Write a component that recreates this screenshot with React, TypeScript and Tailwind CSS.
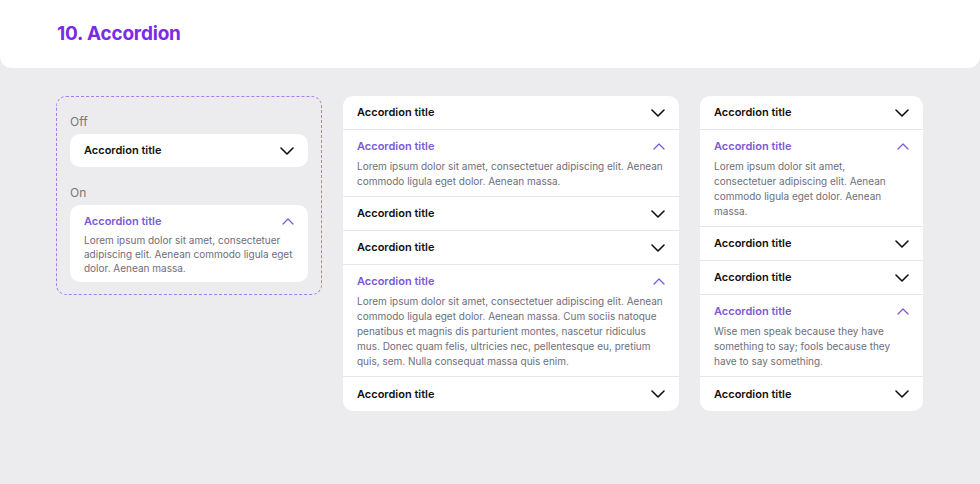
import React from "react";

const Down = () => (
  <svg width="14" height="8" viewBox="0 0 14 8" fill="none"><path d="M1 1l6 6 6-6" stroke="#111" strokeWidth="1.6" strokeLinecap="round" strokeLinejoin="round"/></svg>
);
const Up = () => (
  <svg width="12" height="7" viewBox="0 0 12 7" fill="none"><path d="M1 6l5-5 5 5" stroke="#7b5ad6" strokeWidth="1.3" strokeLinecap="round" strokeLinejoin="round"/></svg>
);

const Closed = ({ last }: { last?: boolean }) => (
  <div className={`h-[34px] flex items-center justify-between px-[14px] ${last ? "" : "border-b border-[#e6e6ea]"}`}>
    <span className="text-[11px] font-semibold text-[#111]">Accordion title</span>
    <Down />
  </div>
);
const Open = ({ text }: { text: string }) => (
  <div className="px-[14px] pt-[9px] pb-[7px] border-b border-[#e6e6ea]">
    <div className="flex items-center justify-between h-[14px]">
      <span className="text-[11px] font-semibold text-[#7b5ad6]">Accordion title</span>
      <Up />
    </div>
    <p className="mt-[6px] text-[10px] leading-[15px] text-[#6e6e7a]">{text}</p>
  </div>
);

const short = "Lorem ipsum dolor sit amet, consectetuer adipiscing elit. Aenean commodo ligula eget dolor. Aenean massa.";
const long = "Lorem ipsum dolor sit amet, consectetuer adipiscing elit. Aenean commodo ligula eget dolor. Aenean massa. Cum sociis natoque penatibus et magnis dis parturient montes, nascetur ridiculus mus. Donec quam felis, ultricies nec, pellentesque eu, pretium quis, sem. Nulla consequat massa quis enim.";

export default function App() {
  return (
    <div className="w-[980px] h-[484px] bg-[#ececee] overflow-hidden" style={{ fontFamily: "Inter, 'Noto Sans', sans-serif" }}>
      <div className="h-[68px] bg-white rounded-b-[12px] flex items-center px-[57px]">
        <h1 className="text-[19px] font-bold text-[#7c2ae8] tracking-[-0.2px]">10. Accordion</h1>
      </div>
      <div className="flex items-start gap-[21px] pl-[56px] pt-[28px]">
        <div className="w-[266px] border border-dashed border-[#a77cf0] rounded-[10px] px-[13px] pt-[16px] pb-[12px]">
          <div className="text-[12px] text-[#777]">Off</div>
          <div className="mt-[3px] bg-white rounded-[10px] h-[33px] flex items-center justify-between px-[14px]">
            <span className="text-[11px] font-semibold text-[#111]">Accordion title</span>
            <Down />
          </div>
          <div className="mt-[17px] text-[12px] text-[#777]">On</div>
          <div className="mt-[3px] bg-white rounded-[10px] px-[14px] pt-[9px] pb-[7px]">
            <div className="flex items-center justify-between h-[14px]">
              <span className="text-[11px] font-semibold text-[#7b5ad6]">Accordion title</span>
              <Up />
            </div>
            <p className="mt-[5px] text-[10px] leading-[14px] text-[#6e6e7a]">{short}</p>
          </div>
        </div>
        <div className="w-[336px] bg-white rounded-[10px] overflow-hidden">
          <Closed />
          <Open text={short} />
          <Closed />
          <Closed />
          <Open text={long} />
          <Closed last />
        </div>
        <div className="w-[223px] bg-white rounded-[10px] overflow-hidden">
          <Closed />
          <Open text={short} />
          <Closed />
          <Closed />
          <Open text="Wise men speak because they have something to say; fools because they have to say something." />
          <Closed last />
        </div>
      </div>
    </div>
  );
}
